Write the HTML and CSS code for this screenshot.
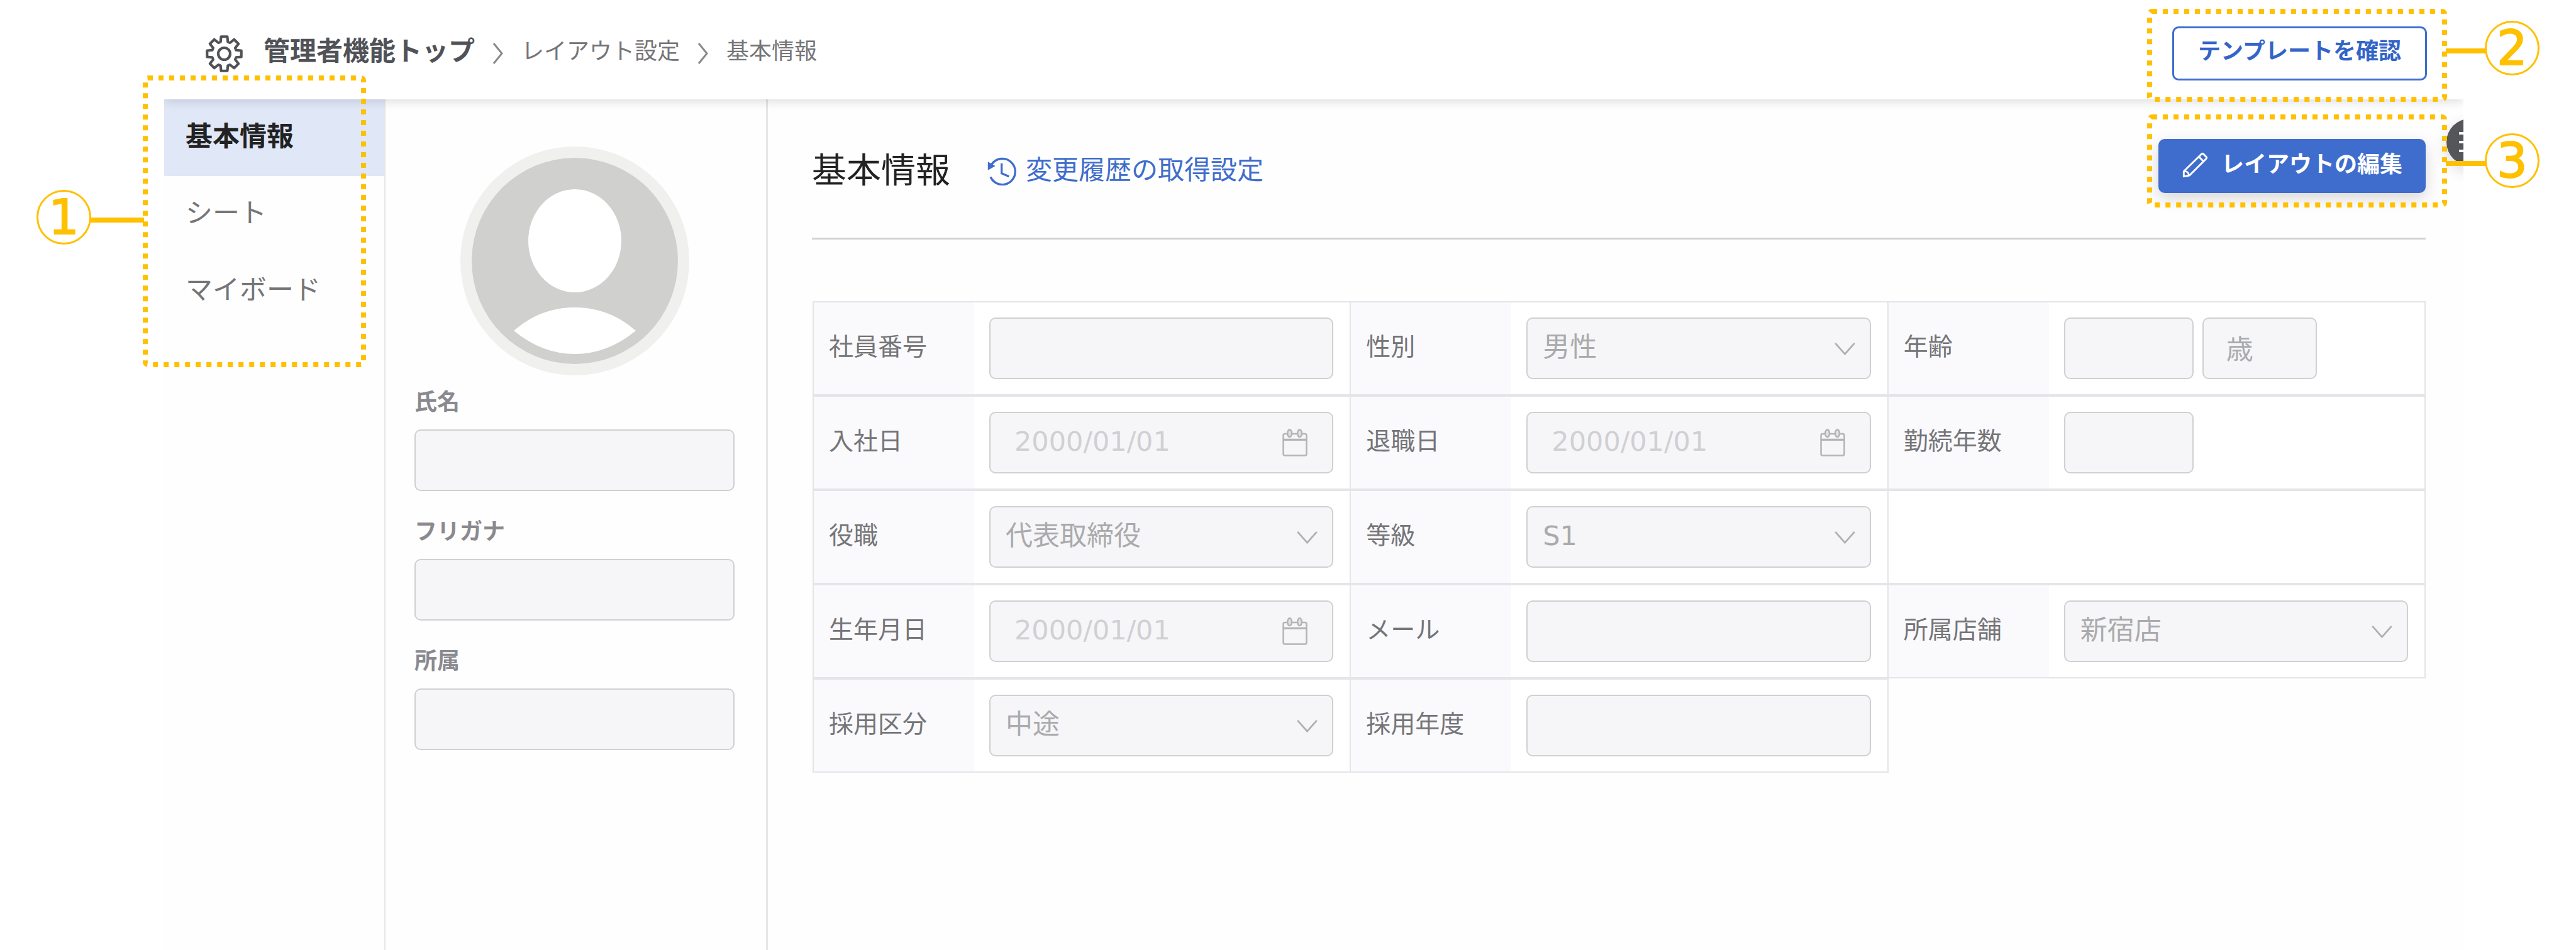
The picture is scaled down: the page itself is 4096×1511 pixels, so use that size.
FILE: index.html
```html
<!DOCTYPE html>
<html lang="ja">
<head>
    <meta charset="UTF-8">
    <meta name="viewport" content="width=device-width, initial-scale=1.0">
    <title>レイアウト設定 - 基本情報</title>
    <link rel="stylesheet" href="styles.css">
</head>
<body>
    <!-- shared icons -->
    <svg class="sprite" aria-hidden="true">
        <symbol id="icon-calendar" viewBox="24 18 50 56">
            <g fill="none" stroke="#b4b4b6" stroke-width="3">
                <rect x="27" y="30" width="44" height="41" rx="3"/>
                <path d="M27 41H71" stroke-width="4"/>
                <ellipse cx="39" cy="29" rx="4" ry="7" fill="#e4e4e6"/>
                <ellipse cx="58" cy="29" rx="4" ry="7" fill="#e4e4e6"/>
            </g>
        </symbol>
        <symbol id="icon-down" viewBox="0 0 36 22">
            <path d="M2 2L18 20L34 2" fill="none" stroke="#b0b0b2" stroke-width="3"/>
        </symbol>
        <symbol id="icon-next" viewBox="0 0 18 36">
            <path d="M2 2L15 18L2 34" fill="none" stroke="#8a8a8d" stroke-width="3"/>
        </symbol>
    </svg>

    <div class="stage">
        <div class="app">
            <header class="topbar">
                <nav class="breadcrumb">
                    <svg class="gear" viewBox="-37 -37 74 74">
                        <g fill="none" stroke="#505257" stroke-width="5" stroke-linejoin="round">
                            <path d="M-7-23L-6-33H6L7-23L11.3-21.2L19.1-27.6L27.6-19.1L21.2-11.3L23-7L33-6V6L23 7L21.2 11.3L27.6 19.1L19.1 27.6L11.3 21.2L7 23L6 33H-6L-7 23L-11.3 21.2L-19.1 27.6L-27.6 19.1L-21.2 11.3L-23 7L-33 6V-6L-23-7L-21.2-11.3L-27.6-19.1L-19.1-27.6L-11.3-21.2Z"/>
                            <circle r="11.5"/>
                        </g>
                    </svg>
                    <a href="#" class="home">管理者機能トップ</a>
                    <svg class="next"><use href="#icon-next"/></svg>
                    <a href="#">レイアウト設定</a>
                    <svg class="next"><use href="#icon-next"/></svg>
                    <span>基本情報</span>
                </nav>
                <button type="button" class="btn btn-outline">テンプレートを確認</button>
            </header>

            <div class="columns">
                <nav class="sidebar">
                    <a href="#" class="active">基本情報</a>
                    <a href="#">シート</a>
                    <a href="#">マイボード</a>
                </nav>

                <section class="profile">
                    <svg class="avatar" viewBox="0 0 364 364">
                        <circle cx="182" cy="182" r="182" fill="#f0f0ee"/>
                        <circle cx="182" cy="182" r="164" fill="#d0d0ce"/>
                        <ellipse cx="182" cy="150" rx="74" ry="82" fill="#fff"/>
                        <path d="M85 293Q127 256 182 256T279 293Q234 330 182 330T85 293Z" fill="#fff"/>
                    </svg>
                    <div class="profile-field">
                        <label for="name">氏名</label>
                        <input type="text" id="name" disabled>
                    </div>
                    <div class="profile-field">
                        <label for="kana">フリガナ</label>
                        <input type="text" id="kana" disabled>
                    </div>
                    <div class="profile-field">
                        <label for="dept">所属</label>
                        <input type="text" id="dept" disabled>
                    </div>
                </section>

                <main class="content">
                    <div class="content-head">
                        <div class="heading">
                            <h1>基本情報</h1>
                            <a href="#">
                                <svg class="history" viewBox="20 20 56 56">
                                    <g fill="none" stroke="#3f6dcd" stroke-width="4">
                                        <path d="M26 60A24.5 24.5 0 1 0 28 36"/>
                                        <path d="M47 34V53L61 59"/>
                                    </g>
                                    <path d="M21 31V47L35 39Z" fill="#3f6dcd"/>
                                </svg>
                                <span>変更履歴の取得設定</span>
                            </a>
                        </div>
                        <button type="button" class="btn btn-primary">
                            <svg class="pencil" viewBox="28 20 52 52">
                                <g fill="none" stroke="#fff" stroke-width="3.5" stroke-linejoin="round">
                                    <path d="M32 68V58L66 25Q68 23 70 25L75 30Q77 32 75 34L43 66Z"/>
                                    <path d="M61 30L70 39M33 58Q41 58 42 66"/>
                                </g>
                            </svg>
                            <span>レイアウトの編集</span>
                        </button>
                    </div>

                    <form class="grid">
                        <div class="cell">
                            <label for="empno">社員番号</label>
                            <div class="field"><input type="text" id="empno" disabled></div>
                        </div>
                        <div class="cell">
                            <label for="sex">性別</label>
                            <div class="field">
                                <select id="sex" disabled><option>男性</option></select>
                                <svg class="down"><use href="#icon-down"/></svg>
                            </div>
                        </div>
                        <div class="cell">
                            <label for="age">年齢</label>
                            <div class="field">
                                <input type="text" id="age" class="short" disabled>
                                <input type="text" class="unit" value="歳" aria-label="単位" disabled>
                            </div>
                        </div>

                        <div class="cell">
                            <label for="joined">入社日</label>
                            <div class="field">
                                <input type="text" id="joined" class="date" placeholder="2000/01/01" disabled>
                                <svg class="calendar"><use href="#icon-calendar"/></svg>
                            </div>
                        </div>
                        <div class="cell">
                            <label for="left">退職日</label>
                            <div class="field">
                                <input type="text" id="left" class="date" placeholder="2000/01/01" disabled>
                                <svg class="calendar"><use href="#icon-calendar"/></svg>
                            </div>
                        </div>
                        <div class="cell">
                            <label for="years">勤続年数</label>
                            <div class="field"><input type="text" id="years" class="short" disabled></div>
                        </div>

                        <div class="cell">
                            <label for="post">役職</label>
                            <div class="field">
                                <select id="post" disabled><option>代表取締役</option></select>
                                <svg class="down"><use href="#icon-down"/></svg>
                            </div>
                        </div>
                        <div class="cell">
                            <label for="grade">等級</label>
                            <div class="field">
                                <select id="grade" disabled><option>S1</option></select>
                                <svg class="down"><use href="#icon-down"/></svg>
                            </div>
                        </div>
                        <div class="cell"></div>

                        <div class="cell">
                            <label for="birth">生年月日</label>
                            <div class="field">
                                <input type="text" id="birth" class="date" placeholder="2000/01/01" disabled>
                                <svg class="calendar"><use href="#icon-calendar"/></svg>
                            </div>
                        </div>
                        <div class="cell">
                            <label for="mail">メール</label>
                            <div class="field"><input type="text" id="mail" disabled></div>
                        </div>
                        <div class="cell">
                            <label for="store">所属店舗</label>
                            <div class="field">
                                <select id="store" disabled><option>新宿店</option></select>
                                <svg class="down"><use href="#icon-down"/></svg>
                            </div>
                        </div>

                        <div class="cell">
                            <label for="hire-type">採用区分</label>
                            <div class="field">
                                <select id="hire-type" disabled><option>中途</option></select>
                                <svg class="down"><use href="#icon-down"/></svg>
                            </div>
                        </div>
                        <div class="cell">
                            <label for="hire-year">採用年度</label>
                            <div class="field"><input type="text" id="hire-year" disabled></div>
                        </div>
                    </form>
                </main>
            </div>

            <button type="button" class="menu" aria-label="メニュー"><i></i><i></i><i></i></button>
        </div>

        <!-- numbered callouts -->
        <div class="callout callout-1">
            <div class="tag"><span class="num">1</span><span class="line"></span></div>
            <svg class="dots"><rect x="4" y="4" rx="4"/></svg>
        </div>
        <div class="callout callout-2">
            <svg class="dots"><rect x="4" y="4" rx="4"/></svg>
            <div class="tag"><span class="line"></span><span class="num">2</span></div>
        </div>
        <div class="callout callout-3">
            <svg class="dots"><rect x="4" y="4" rx="4"/></svg>
            <div class="tag"><span class="line"></span><span class="num">3</span></div>
        </div>
    </div>
</body>
</html>
```

FILE: styles.css
```css
* {
    box-sizing: border-box;
}
body {
    margin: 0;
    background-color: #fff;
    color: #757578;
    font-family: "DejaVu Sans", "Noto Sans CJK JP", sans-serif;
    font-size: 43px;
    line-height: 50px;
}
a {
    color: inherit;
    text-decoration: none;
}
svg {
    display: block;
    flex: none;
}
.sprite {
    position: absolute;
    width: 0;
    height: 0;
}
.stage {
    position: relative;
    padding: 0 179px 0 261px;
}
.app {
    position: relative;
    display: flex;
    flex-direction: column;
    min-height: 100vh;
    overflow: hidden;
    background-color: #fefefe;
}

/* header */
.topbar {
    position: relative;
    z-index: 1;
    display: flex;
    align-items: center;
    justify-content: space-between;
    height: 158px;
    padding: 12px 58px 0 65px;
    background-color: #fff;
    box-shadow: 0 2px 16px rgba(0,0,0,0.16);
}
.breadcrumb {
    display: flex;
    align-items: center;
    gap: 28px;
    font-size: 36px;
}
.breadcrumb a, .breadcrumb span {
    padding-bottom: 6px;
}
.breadcrumb .home {
    color: #505257;
    font-size: 42px;
    font-weight: bold;
}
.gear {
    width: 61px;
    height: 61px;
    margin-right: 4px;
}
.next {
    width: 18px;
    height: 36px;
}
.btn {
    display: flex;
    align-items: center;
    justify-content: center;
    height: 86px;
    padding: 0 36px 4px;
    border: 3px solid #3f6dcd;
    border-radius: 10px;
    font-family: inherit;
    font-size: 36px;
    font-weight: bold;
    line-height: 50px;
}
.btn-outline {
    padding: 0 38px 6px;
    background-color: #fff;
    color: #3364c8;
}
.btn-primary {
    gap: 20px;
    padding: 0 34px 4px;
    background-color: #3f6dcd;
    color: #fff;
    box-shadow: 0 8px 24px rgba(0,0,0,0.16);
}
.pencil {
    width: 43px;
    height: 43px;
}

.columns {
    display: flex;
    flex: 1;
}

/* left menu */
.sidebar {
    width: 352px;
    border-right: 2px solid #e6e6e8;
}
.sidebar a {
    display: flex;
    align-items: center;
    height: 122px;
    padding: 0 34px 4px;
}
.sidebar .active {
    background-color: #e0e7f7;
    color: #222;
    font-weight: bold;
}

/* profile */
.profile {
    display: flex;
    flex-direction: column;
    width: 608px;
    padding: 75px 50px 0 46px;
    border-right: 3px solid #e6e6e8;
}
.avatar {
    align-self: center;
    width: 364px;
    height: 364px;
    margin-bottom: 18px;
}
.profile-field {
    margin-bottom: 40px;
}
.profile-field label {
    display: block;
    margin-bottom: 18px;
    color: #8a8a8e;
    font-size: 36px;
    font-weight: bold;
}
input, select {
    display: block;
    width: 100%;
    height: 98px;
    padding: 0 24px 4px;
    border: 2px solid #d0d0d3;
    border-radius: 10px;
    background-color: #f6f6f8;
    color: #aaaaad;
    font-family: inherit;
    font-size: 43px;
    line-height: 50px;
    opacity: 1;
    appearance: none;
}
input::placeholder {
    color: #d0d0d3;
}

/* main */
.content {
    flex: 1;
    padding: 63px 60px 0 70px;
}
.content-head {
    display: flex;
    align-items: center;
    justify-content: space-between;
    padding-bottom: 71px;
    border-bottom: 3px solid #d2d2d4;
}
.heading {
    display: flex;
    align-items: center;
    gap: 59px;
    padding-top: 14px;
}
.heading h1 {
    margin: 0;
    color: #222;
    font-size: 55px;
    font-weight: normal;
}
.heading a {
    display: flex;
    align-items: center;
    gap: 14px;
    color: #3f6dcd;
    font-size: 42px;
}
.history {
    width: 47px;
    height: 47px;
}
.grid {
    display: grid;
    grid-template-columns: repeat(3, 1fr);
    grid-auto-rows: 150px;
    margin-top: 98px;
    padding: 0 2px 0 1px;
}
.cell {
    display: flex;
    margin-right: -2px;
    border: 2px solid #e4e4e9;
    background-color: #fff;
}
.cell label {
    display: flex;
    align-items: center;
    width: 255px;
    padding: 0 0 4px 24px;
    background-color: #fafafd;
    font-size: 39px;
}
.field {
    position: relative;
    display: flex;
    flex: 1;
    align-items: center;
    gap: 14px;
    padding: 0 26px 0 24px;
}
.field .short {
    width: 206px;
}
.field .unit {
    width: 182px;
    padding-left: 36px;
}
.field .date {
    padding-left: 38px;
}
.down {
    position: absolute;
    top: 63px;
    right: 50px;
    width: 35px;
    height: 21px;
}
.calendar {
    position: absolute;
    top: 49px;
    right: 66px;
    width: 42px;
    height: 47px;
}

/* round menu button, half outside the window */
.menu {
    position: absolute;
    top: 189px;
    right: -47px;
    display: flex;
    flex-direction: column;
    justify-content: center;
    gap: 10px;
    width: 74px;
    height: 74px;
    padding: 0 20px;
    border: none;
    border-radius: 50%;
    background-color: #55565a;
    box-shadow: 0 8px 24px rgba(0,0,0,0.16);
}
.menu i {
    height: 4px;
    background-color: #fff;
}

/* callouts */
.callout {
    position: absolute;
    z-index: 2;
    display: flex;
    align-items: flex-start;
    color: #ffc000;
}
.callout-1 {
    top: 120px;
    left: 58px;
    height: 464px;
}
.callout-2 {
    top: 14px;
    right: 58px;
    height: 148px;
}
.callout-3 {
    top: 182px;
    right: 58px;
    height: 148px;
}
.tag {
    display: flex;
    align-items: center;
}
.callout-1 .tag {
    padding-top: 182px;
}
.callout-2 .tag {
    padding-top: 19px;
}
.callout-3 .tag {
    padding-top: 30px;
}
.num {
    width: 87px;
    height: 87px;
    margin-bottom: 8px;
    border: 3px solid #ffc000;
    border-radius: 50%;
    font-size: 76px;
    line-height: 81px;
    text-align: center;
    -webkit-text-stroke: 2px #ffc000;
}
.line {
    width: 64px;
    height: 8px;
    margin: 0 -2px;
    background-color: #ffc000;
}
.callout-1 .line {
    width: 86px;
}
.dots {
    width: 477px;
    height: 100%;
}
.callout-1 .dots {
    width: 355px;
}
.dots rect {
    width: calc(100% - 8px);
    height: calc(100% - 8px);
    fill: none;
    stroke: #ffc000;
    stroke-width: 8px;
    stroke-dasharray: 8 9;
}
```
